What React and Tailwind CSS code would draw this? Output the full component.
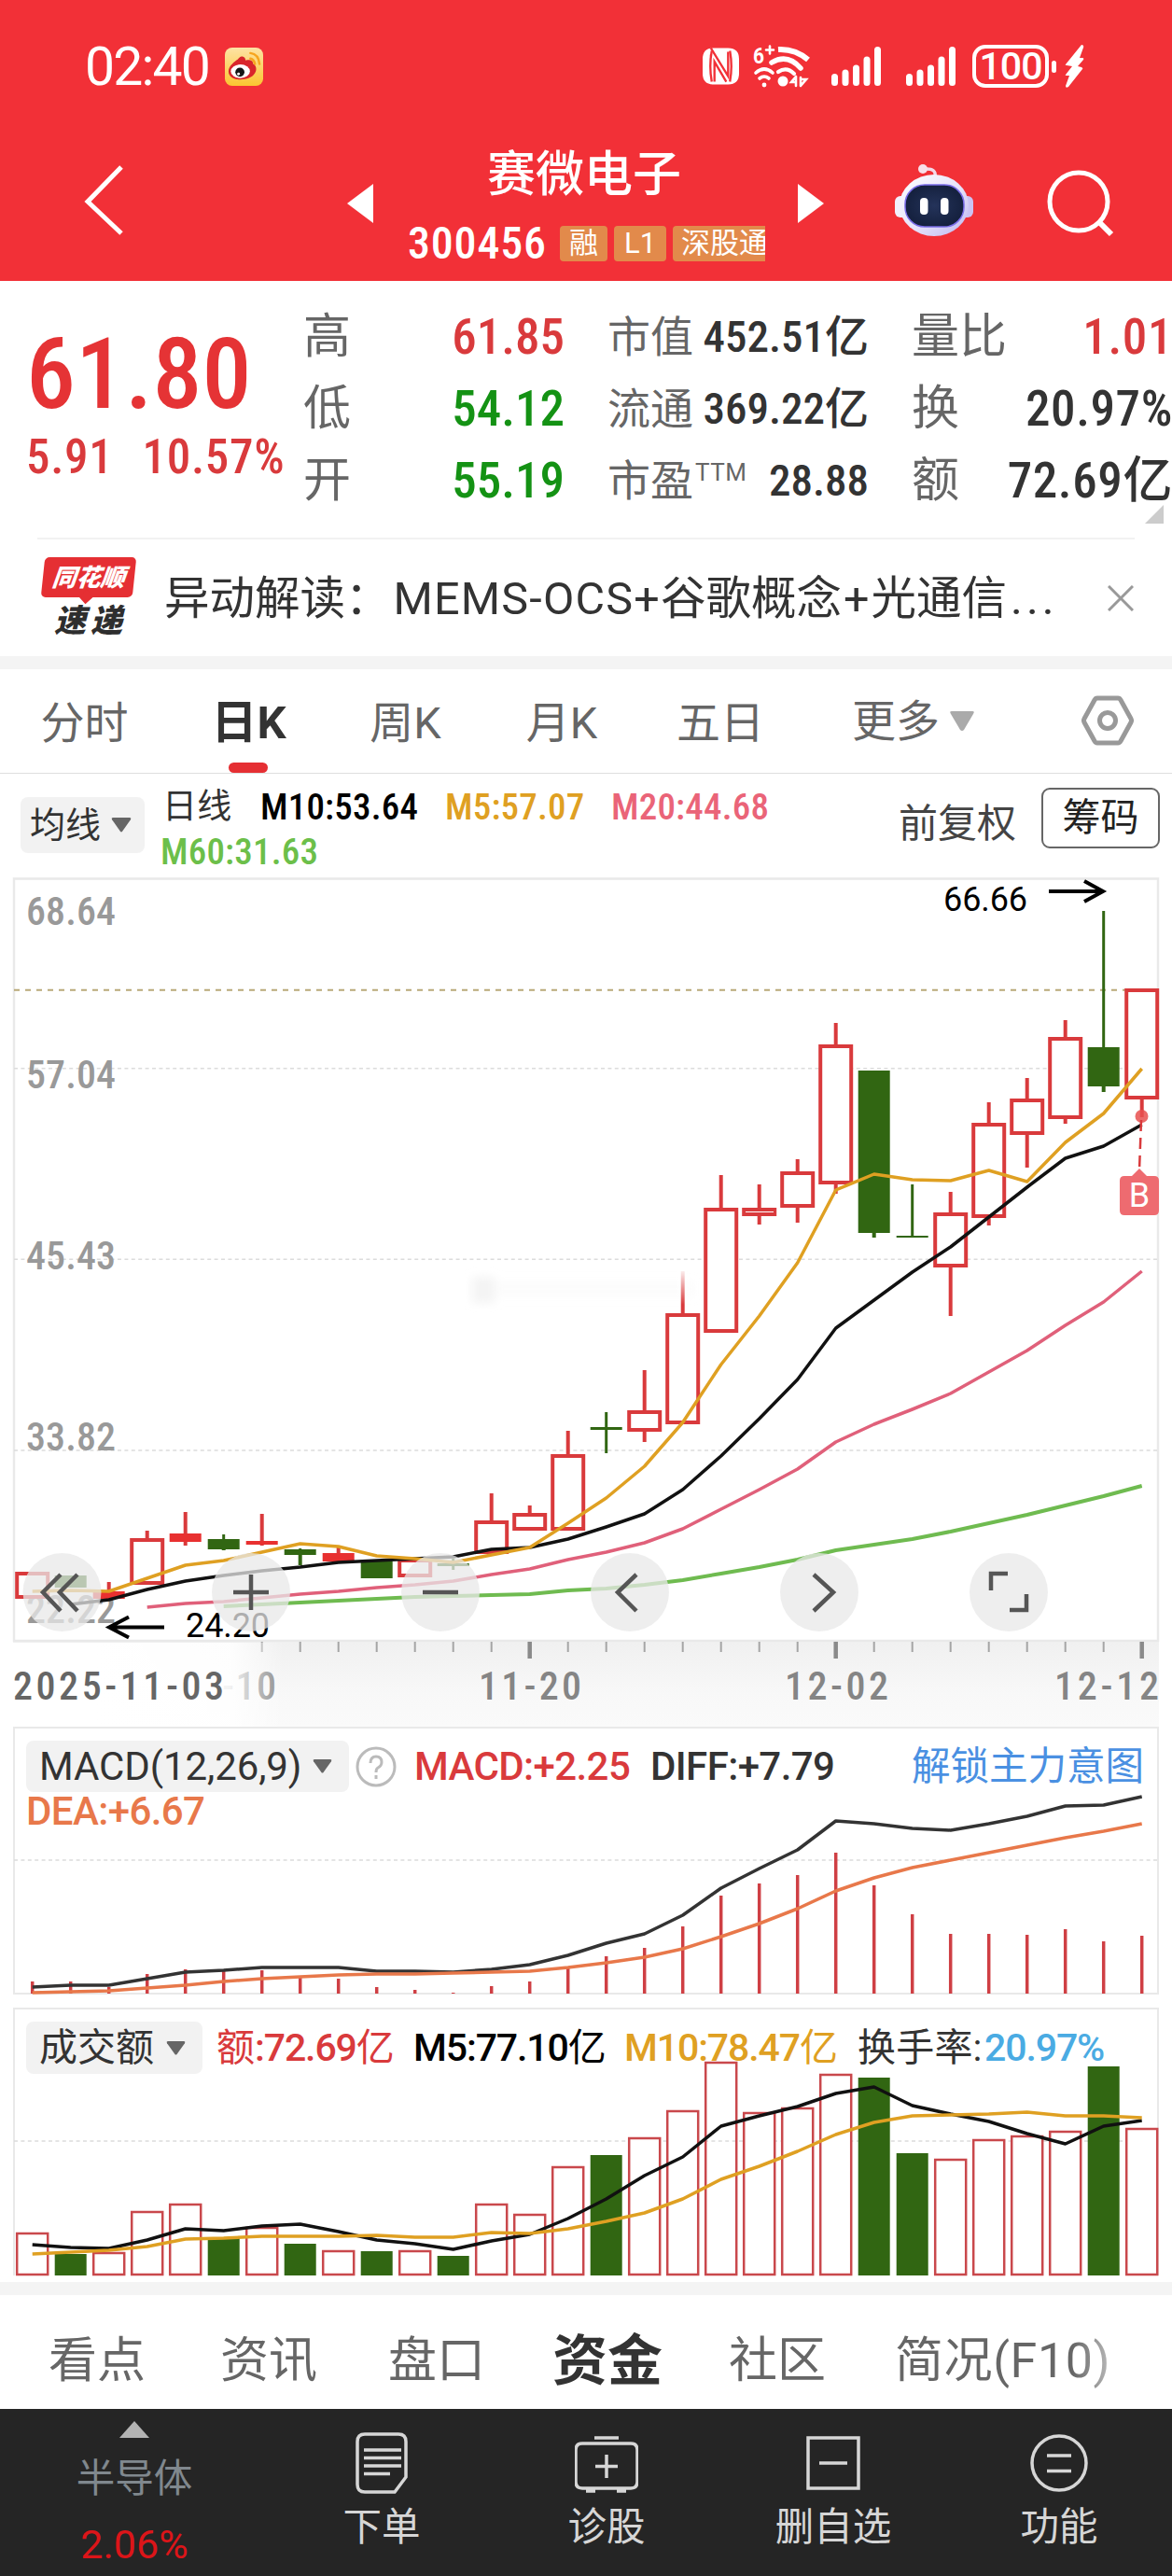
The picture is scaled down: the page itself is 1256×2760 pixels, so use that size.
import clsx from "clsx";

const RED = "#d93a3c";
const GREEN = "#316612";
const GOLD = "#dfa022";

// x centre of the nth trading day
const cx = (i) => 34.7 + i * 41;

// kind: h = hollow up, f = filled up, g = filled down, c = flat down
const CANDLES = [
  ["h", 1684, 1713, 1684, 1713],
  ["g", 1688, 1701, 1688, 1701],
  ["f", 1705, 1713, 1695, 1713],
  ["h", 1648, 1698, 1640, 1698],
  ["f", 1643, 1652, 1620, 1656],
  ["g", 1649, 1660, 1644, 1661],
  ["f", 1651, 1655, 1622, 1656],
  ["g", 1660, 1666, 1659, 1677],
  ["f", 1664, 1673, 1657, 1673],
  ["g", 1673, 1691, 1673, 1691],
  ["h", 1670, 1690, 1670, 1690],
  ["c", 1675, 1678, 1670, 1682],
  ["h", 1629, 1665, 1600, 1665],
  ["h", 1621, 1640, 1613, 1640],
  ["h", 1558, 1640, 1533, 1640],
  ["c", 1529, 1532, 1513, 1557],
  ["h", 1511, 1534, 1468, 1545],
  ["h", 1407, 1526, 1362, 1526],
  ["h", 1294, 1428, 1259, 1428],
  ["h", 1294, 1303, 1269, 1312],
  ["h", 1255, 1294, 1242, 1310],
  ["h", 1119, 1269, 1096, 1279],
  ["g", 1147, 1321, 1147, 1326],
  ["c", 1324, 1326, 1269, 1326],
  ["h", 1299, 1358, 1277, 1410],
  ["h", 1203, 1305, 1181, 1313],
  ["h", 1177, 1216, 1155, 1251],
  ["h", 1111, 1199, 1093, 1204],
  ["g", 1122, 1164, 976, 1170],
  ["h", 1059, 1178, 1059, 1197],
];

const MA5 = [1705, 1704, 1705, 1691, 1677, 1672, 1663, 1654, 1657, 1667, 1670, 1674, 1666, 1658, 1632, 1605, 1571, 1524, 1462, 1410, 1353, 1275, 1258, 1264, 1265, 1254, 1266, 1224, 1193, 1145];
const MA10 = [1719, 1714, 1703, 1694, 1688, 1683, 1679, 1674, 1672, 1670, 1668, 1660, 1658, 1649, 1636, 1622, 1596, 1560, 1520, 1478, 1423, 1393, 1363, 1336, 1304, 1272, 1241, 1228, 1205];
const MA20 = [1722, 1718, 1716, 1712, 1708, 1705, 1701, 1698, 1694, 1687, 1681, 1671, 1663, 1653, 1638, 1617, 1596, 1574, 1545, 1526, 1510, 1493, 1470, 1447, 1420, 1395, 1362];
const MA60 = [1721, 1719, 1717, 1715, 1713, 1711, 1710, 1709, 1708, 1704, 1702, 1698, 1693, 1686, 1679, 1671, 1661, 1655, 1649, 1641, 1632, 1623, 1613, 1603, 1592];

const MACD_BARS = [2123, 2123, 2129, 2115, 2110, 2111, 2111, 2118, 2120, 2129, 2132, 2135, 2128, 2123, 2109, 2096, 2087, 2064, 2031, 2018, 2009, 1985, 2020, 2051, 2072, 2072, 2073, 2067, 2080, 2074];
const DIFF = [2129, 2127, 2127, 2120, 2113, 2111, 2108, 2108, 2108, 2112, 2112, 2113, 2110, 2105, 2095, 2082, 2072, 2052, 2023, 2002, 1982, 1951, 1954, 1959, 1961, 1954, 1946, 1935, 1934, 1925];
const DEA = [2135, 2134, 2133, 2130, 2127, 2123, 2120, 2118, 2116, 2115, 2115, 2114, 2113, 2112, 2108, 2103, 2097, 2088, 2075, 2061, 2045, 2026, 2012, 2001, 1993, 1985, 1977, 1969, 1962, 1954];

const VOLUMES = [2392, 2415, 2413, 2369, 2361, 2398, 2386, 2404, 2411, 2412, 2411, 2417, 2361, 2372, 2321, 2309, 2290, 2261, 2209, 2263, 2258, 2222, 2226, 2307, 2313, 2292, 2288, 2283, 2214, 2280];
const VOLUME_DOWN = [1, 5, 7, 9, 11, 15, 22, 23, 28];
const VOL_M5 = [2405, 2408, 2409, 2400, 2388, 2390, 2385, 2383, 2391, 2400, 2404, 2410, 2401, 2394, 2377, 2356, 2331, 2311, 2278, 2267, 2257, 2243, 2236, 2256, 2265, 2273, 2286, 2297, 2278, 2272];
const VOL_M10 = [2415, 2413, 2411, 2407, 2399, 2398, 2396, 2396, 2396, 2395, 2397, 2397, 2392, 2393, 2388, 2380, 2371, 2356, 2335, 2321, 2305, 2287, 2274, 2267, 2266, 2265, 2263, 2267, 2267, 2269];

const Line = ({ data, from = 0, color, width = 3.5 }) => (
  <polyline
    points={data.map((y, i) => `${cx(i + from)},${y}`).join(" ")}
    fill="none"
    stroke={color}
    strokeWidth={width}
    strokeLinejoin="round"
  />
);

const Dashes = ({ y }) => (
  <line x1="15" x2="1241" y1={y} y2={y} stroke="#dcdcdc" strokeWidth="1.5" strokeDasharray="4 3.4" />
);

const Caret = ({ className }) => (
  <svg viewBox="0 0 20 14" preserveAspectRatio="none" className={className} fill="currentColor">
    <path d="M2 0h16q2 0 1 2l-8 11q-1 1-2 0L1 2Q0 0 2 0z" />
  </svg>
);

// --- Status bar ---
const Signal = () => (
  <svg viewBox="0 0 53 42" className="h-[42px] w-[53px]" stroke="#fff" strokeWidth="7" strokeLinecap="round">
    <path d="M3.5 32.500v6M15 28v10.500M26.500 23v15.500M38 14v24.500M49.500 3.500v35" />
  </svg>
);

const StatusBar = () => (
  <div className="flex h-[142px] items-center pl-[91px]">
    <span className="w-[150px] pt-[2px] text-[57px] leading-[68px] tracking-[-1.800px] text-white [font-family:Roboto,sans-serif]">02:40</span>
    <svg viewBox="0 0 42 42" className="h-[41px] w-[41px]">
      <defs>
        <linearGradient id="wb" x1="0" y1="0" x2="0" y2="1">
          <stop offset="0" stopColor="#fde3a4" />
          <stop offset="1" stopColor="#fbc531" />
        </linearGradient>
      </defs>
      <rect width="42" height="42" rx="8" fill="url(#wb)" />
      <path d="M28 6q9 1 10 12M28 12q4 1 5 6" fill="none" stroke="#f7a51e" strokeWidth="2.500" strokeLinecap="round" />
      <path d="M4 26c0-6 7-11 10-13 2-2 3-4 6-3 3 1 2 3 3 4 4-1 8 0 8 4 4 2 4 7 2 10-3 5-9 7-16 7-7 0-13-3-13-9z" fill="#d9252b" />
      <ellipse cx="17" cy="26" rx="10.500" ry="7.500" fill="#fff" />
      <circle cx="16.500" cy="27" r="5" fill="#161616" />
      <circle cx="15" cy="29" r="1.500" fill="#fff" />
    </svg>

    {/* nfc */}
    <svg viewBox="0 0 40 40" className="ml-[471px] h-10 w-[39px]">
      <path d="M12 0h16q12 0 12 12v16q0 12-12 12H12Q0 40 0 28V12Q0 0 12 0z" fill="#fff" />
      <path d="M10 3c-2 11-2 23 0 34M30 3c2 11 2 23 0 34" fill="none" stroke="#f23037" strokeWidth="2.400" />
      <path d="M9 0l19 31V4M9 8l-1 0M13 37V15l13 22" fill="none" stroke="#f23037" strokeWidth="2.400" />
    </svg>
    {/* wifi 6+ */}
    <svg viewBox="0 0 62 46" className="ml-[15px] h-[46px] w-[62px] overflow-visible" fill="none" stroke="#fff" strokeWidth="4.200" strokeLinecap="round">
      <text x="0" y="20" fontSize="24" fontWeight="700" stroke="none" fill="#fff" textLength="12" lengthAdjust="spacingAndGlyphs">6</text>
      <path d="M14 5.500h8M18 1.500v8" strokeWidth="2.600" />
      <path d="M27 5q18-1 32 11" strokeWidth="6" strokeLinecap="butt" />
      <path d="M20 19q17-10 31 6" strokeWidth="5.500" />
      <path d="M27 29q9-6 17 2" />
      <path d="M3 30q9-8 18 0M7 36q5-4 10 0" strokeWidth="3.600" />
      <circle cx="12" cy="43" r="2.400" fill="#fff" stroke="none" />
      <circle cx="32" cy="39" r="5.500" fill="#fff" stroke="none" />
      <path d="M46 34v10M46 34l-5 6h5M51 35v9M51 44l6-7h-6" strokeWidth="2.600" />
    </svg>
    <div className="ml-[22px] flex gap-[27px]">
      <Signal />
      <Signal />
    </div>
    <div className="ml-[18px] flex h-[46px] w-[82px] items-center justify-center rounded-[14px] border-[4px] border-white text-[41px] leading-none font-medium tracking-[-1px] text-white">
      100
    </div>
    <div className="ml-[3px] h-[13px] w-[5px] rounded-full bg-white" />
    <svg viewBox="0 0 21 46" className="ml-[9px] h-[46px] w-[21px]" fill="#fff">
      <path d="M18 0 1 21q-1 1 1 1l6 1-7 9q-1 1 1 1h3L1 44q0 3 3 1l15-19q1-1-1-2l-4-1 6-7q1-2-1-2l-3 0 4-11q1-3-2-3z" />
    </svg>
  </div>
);

const Robot = () => (
  <svg viewBox="0 0 84 77" className="h-[77px] w-[84px]">
    <defs>
      <linearGradient id="head" x1="0" y1="0" x2="1" y2="1">
        <stop offset="0" stopColor="#ffffff" />
        <stop offset="0.550" stopColor="#e6e2fa" />
        <stop offset="1" stopColor="#bdb6f0" />
      </linearGradient>
      <radialGradient id="visor">
        <stop offset="0" stopColor="#24335a" />
        <stop offset="1" stopColor="#15213f" />
      </radialGradient>
    </defs>
    <path d="M43 14q2-10-11-9" fill="none" stroke="#f3d9e8" strokeWidth="3.500" />
    <circle cx="30" cy="5" r="5" fill="#f8dfe9" />
    <rect x="0" y="34" width="14" height="23" rx="6" fill="#f2effd" />
    <rect x="70" y="34" width="14" height="23" rx="6" fill="#cbc3f3" />
    <ellipse cx="42" cy="44" rx="37" ry="33" fill="url(#head)" />
    <rect x="11" y="22" width="63" height="45" rx="21" fill="url(#visor)" stroke="#7a6ce8" strokeWidth="1.500" />
    <rect x="27" y="36" width="8.500" height="18" rx="4" fill="#fff" />
    <rect x="49" y="36" width="8.500" height="18" rx="4" fill="#fff" />
  </svg>
);

const TitleBar = () => (
  <div className="flex h-[159px] pl-[88px]">
    <svg viewBox="0 0 48 80" className="mt-[33px] h-[80px] w-[48px]" fill="none" stroke="#fff" strokeWidth="5">
      <path d="M42 4 6 41l36 34" />
    </svg>
    <svg viewBox="0 0 28 42" className="mt-[55px] ml-[236px] h-[42px] w-[28px]" fill="#fff">
      <path d="M28 0v42L0 21z" />
    </svg>
    <div className="ml-[37px] flex w-[384px] flex-col">
      <div className="mt-[19px] pl-[85px] text-[52px] leading-[54px] font-medium text-white">赛微电子</div>
      <div className="mt-[22px] flex h-[48px] items-center text-white">
        <span className="w-[163px] text-[48px] leading-[58px] font-medium tracking-[0.800px] [font-family:'Roboto_Condensed',sans-serif]">300456</span>
        <div className="flex shrink-0 gap-[7px] text-[31px] leading-[38px]">
          <span className="w-[51px] rounded-[4px] bg-[#e28a4b] text-center">融</span>
          <span className="w-[56px] rounded-[4px] bg-[#e28a4b] text-center">L1</span>
          <span className="w-[99px] shrink-0 overflow-hidden rounded-l-[4px] bg-[#e28a4b] pl-[9px] whitespace-nowrap">深股通</span>
        </div>
      </div>
    </div>
    <svg viewBox="0 0 28 42" className="mt-[55px] ml-[34px] h-[42px] w-[28px]" fill="#fff">
      <path d="M0 0v42l28-21z" />
    </svg>
    <div className="mt-[34px] ml-[76px]">
      <Robot />
    </div>
    <svg viewBox="0 0 72 72" className="mt-[40px] ml-[79px] h-[72px] w-[72px]" fill="none" stroke="#fff" strokeWidth="5">
      <circle cx="34" cy="34" r="31" />
      <path d="m56 56 13 13" strokeWidth="6" />
    </svg>
  </div>
);

// --- Quote ---
const QUOTES = [
  [["高", "61.85", "text-[#d93a3c]"], ["市值", "452.51亿", "text-[#333]"], ["量比", "1.01", "text-[#d93a3c]"]],
  [["低", "54.12", "text-[#149214]"], ["流通", "369.22亿", "text-[#333]"], ["换", "20.97%", "text-[#333]"]],
  [["开", "55.19", "text-[#149214]"], ["市盈", "28.88", "text-[#333]"], ["额", "72.69亿", "text-[#333]"]],
];

const Quote = () => (
  <section className="relative flex h-[275px] [font-family:'Roboto_Condensed','Noto_Sans_CJK_SC',sans-serif]">
    <div className="w-[325px] shrink-0 pl-[28px] whitespace-nowrap text-[#e53335]">
      <div className="mt-[47px] text-[106px] leading-[106px] font-medium">61.80</div>
      <div className="mt-[10px] flex gap-[31px] text-[51px] leading-[52px] font-medium tracking-[0.700px] text-[#d93a3c]">
        <span>5.91</span>
        <span>10.57%</span>
      </div>
    </div>
    <div className="mt-[21px] flex flex-1 flex-col">
      {QUOTES.map((row, r) => (
        <div key={r} className="flex h-[77px] gap-[46px]">
          {row.map(([label, value, color], c) => (
            <div key={label} className="flex w-[280px] shrink-0 items-center justify-between leading-[64px] whitespace-nowrap">
              <span className={clsx("flex text-[#666]", c === 1 ? "text-[46px]" : "text-[51px]")}>
                {label}
                {label === "市盈" && <span className="-mt-[9px] ml-[2px] text-[26px] tracking-[0.500px] [font-family:Roboto]">TTM</span>}
              </span>
              <span className={clsx("font-medium", color, c === 1 && "text-[47px]", c === 0 && "text-[53px]", c === 2 && "text-[53px] tracking-[0.600px]")}>
                {value}
              </span>
            </div>
          ))}
        </div>
      ))}
    </div>
    <svg viewBox="0 0 20 20" className="absolute top-[240px] right-[9px] size-5" fill="#ccc">
      <path d="M20 0v20H0z" />
    </svg>
  </section>
);

const News = () => (
  <section className="mx-[40px] flex h-[127px] items-center border-t-2 border-[#f2f2f2]">
    <div className="ml-[3px] flex h-[88px] w-[103px] flex-col items-center leading-none font-black italic">
      <div className="relative flex h-[43px] w-[98px] -skew-x-6 items-center justify-center rounded-[5px] bg-[#e52f33] text-[26px] text-white">
        同花顺
        <div className="absolute -bottom-[5px] left-[43px] size-[11px] rotate-45 bg-[#e52f33]" />
      </div>
      <div className="mt-[8px] flex gap-[5px] text-[34px] text-[#2e2e2e]">
        <span>速</span>
        <span>递</span>
      </div>
    </div>
    <p className="ml-[30px] w-[1011px] pt-[2px] text-[48.500px] leading-[60px] whitespace-nowrap text-[#333]">
      异动解读：<span className="ml-[3px] tracking-[1.200px]">MEMS-OCS+</span>谷歌概念<span className="px-[2px]">+</span>光通信<span className="ml-[4px] tracking-[4px]">...</span>
    </p>
    <svg viewBox="0 0 28 28" className="h-[28px] w-[28px] shrink-0" stroke="#999" strokeWidth="3">
      <path d="m1 1 26 26M27 1 1 27" />
    </svg>
  </section>
);

// --- Period tabs ---
const PERIODS = [
  ["分时", "w-[181px]"],
  ["日K", "w-[174px]"],
  ["周K", "w-[159px]"],
  ["月K", "w-[176px]"],
  ["五日", "w-[164px]"],
];

const PeriodTabs = () => (
  <nav className="flex h-[112px] border-b border-[#dedede] text-[47px] leading-[115px] text-[#666]">
    {PERIODS.map(([name, width]) => (
      <div key={name} className={clsx("relative text-center", width, name === "日K" && "pr-[3px] text-[49px] font-bold text-[#333]")}>
        {name}
        {name === "日K" && <div className="absolute bottom-0 left-[64px] h-[11px] w-[42px] rounded-full bg-[#e52f33]" />}
      </div>
    ))}
    <div className="flex w-[305px] items-center pl-[59px]">
      更多
      <svg viewBox="0 0 26 22" className="ml-[11px] h-[22px] w-[26px]" fill="#aaa">
        <path d="M2 0h22q3 0 1 3L15 20q-2 2-4 0L1 3Q-1 0 2 0z" />
      </svg>
    </div>
    <svg viewBox="0 0 56 54" className="mt-[28px] h-[54px] w-[56px]" fill="none" stroke="#999" strokeWidth="5" strokeLinejoin="round">
      <path d="M17 3h22q2 0 3 2l11 20q1 2 0 4L42 49q-1 2-3 2H17q-2 0-3-2L3 29q-1-2 0-4L14 5q1-2 3-2z" />
      <circle cx="28" cy="27" r="8.500" />
    </svg>
  </nav>
);

const AverageBar = () => (
  <div className="flex h-[111px]">
    <div className="mt-[25px] ml-[22px] flex h-[60px] w-[133px] items-center rounded-[8px] bg-[#f2f2f2] pl-[10px] text-[38px] leading-none text-[#333]">
      均线
      <Caret className="ml-[11px] h-[16px] w-[22px] text-[#666]" />
    </div>
    <div className="ml-[19px] w-[789px] pt-[12px] text-[39px] leading-[48px] font-medium tracking-[0.200px] [font-family:'Roboto_Condensed','Noto_Sans_CJK_SC',sans-serif]">
      <div className="flex">
        <span className="w-[105px] text-[37px] font-normal text-[#333]">日线</span>
        <span className="w-[198px] text-black">M10:53.64</span>
        <span className="w-[178px] text-[#dfa022]">M5:57.07</span>
        <span className="text-[#ea6478]">M20:44.68</span>
      </div>
      <div className="-ml-[2px] text-[#6cbf4a]">M60:31.63</div>
    </div>
    <div className="mt-[33px] w-[153px] text-[42px] leading-[42px] text-[#444]">前复权</div>
    <div className="mt-[15px] flex h-[65px] w-[127px] items-center justify-center rounded-[9px] border-2 border-[#666] text-[41px] leading-none text-[#222]">
      筹码
    </div>
  </div>
);

// --- K line chart ---
const Candle = ({ i, kind, top, bottom, high, low }) => {
  const color = kind === "g" || kind === "c" ? GREEN : RED;
  const x = cx(i);
  return (
    <g stroke={color} strokeWidth="4">
      {high < top && <line x1={x} x2={x} y1={high} y2={top} strokeWidth={kind === "g" || kind === "c" ? 3 : 4} />}
      {low > bottom && <line x1={x} x2={x} y1={bottom} y2={low} strokeWidth={kind === "c" ? 3 : 4} />}
      {kind === "h" ? (
        <rect x={x - 16.5} y={top + 2} width="33" height={bottom - top - 4} fill="#fff" />
      ) : (
        <rect x={x - 17} y={top} width="34" height={bottom - top} fill={kind === "f" ? "#e83030" : color} stroke="none" />
      )}
    </g>
  );
};

const PRICES = [["68.64", 991], ["57.04", 1166], ["45.43", 1360], ["33.82", 1554], ["22.22", 1739]];
const DATES = [["11-20", 516, 106], ["12-02", 844, 107], ["12-12", 1133, 108]];
const BUTTONS = [
  [66.5, "M65 1687 46 1706l19 20M83 1687l-19 19 19 20"],
  [269, "M250 1706h38M269 1687v38"],
  [472, "M453 1706h38"],
  [675, "M682 1687l-20 19 20 20"],
  [878, "M872 1687l21 19-21 20"],
  [1081, "M1080 1686h-18v18M1100 1708v17h-18"],
];

const KLineChart = () => (
  <svg viewBox="0 940 1256 910" className="block h-[910px] w-[1256px] [font-family:'Roboto_Condensed',sans-serif]">
    <defs>
      <linearGradient id="axis" x1="0" y1="0" x2="0" y2="1">
        <stop offset="0" stopColor="#f0f0f0" />
        <stop offset="0.600" stopColor="#f8f8f8" />
        <stop offset="1" stopColor="#fafafa" />
      </linearGradient>
      <linearGradient id="axisFade" x1="0" x2="1">
        <stop offset="0.300" stopColor="#fff" />
        <stop offset="0.800" stopColor="#fff" stopOpacity="0.900" />
        <stop offset="1" stopColor="#fff" stopOpacity="0" />
      </linearGradient>
      <linearGradient id="wickFade" x1="0" y1="0" x2="0" y2="1">
        <stop offset="0" stopColor="#fff" />
        <stop offset="1" stopColor="#fff" stopOpacity="0" />
      </linearGradient>
      <filter id="smudge" x="-20%" y="-50%" width="140%" height="200%">
        <feGaussianBlur stdDeviation="5" />
      </filter>
    </defs>

    <rect x="14" y="1759" width="1228" height="91" fill="url(#axis)" />
    <rect x="15" y="941.500" width="1226" height="816.500" fill="none" stroke="#e9e9e9" strokeWidth="2.500" />
    {[1144.7, 1349.3, 1554].map((y) => <Dashes key={y} y={y} />)}
    <line x1="15" x2="1210" y1="1060.700" y2="1060.700" stroke="#b9a978" strokeWidth="2" strokeDasharray="6 6" />

    <g filter="url(#smudge)" fill="#ececec">
      <rect x="506" y="1368" width="24" height="28" opacity="0.600" />
      <rect x="530" y="1372" width="215" height="18" opacity="0.150" />
    </g>

    <g fill="#999" fontSize="42" fontWeight="500">
      {PRICES.map(([p, y]) => (
        <text key={p} x="28" y={y} textLength="96">{p}</text>
      ))}
    </g>

    {CANDLES.map(([kind, top, bottom, high, low], i) => (
      <Candle key={i} i={i} kind={kind} top={top} bottom={bottom} high={high} low={low} />
    ))}
    <rect x="725" y="1358" width="14" height="40" fill="url(#wickFade)" />

    <Line data={MA60} from={5} color="#6fbb50" width={4} />
    <Line data={MA20} from={3} color="#e0607a" />
    <Line data={MA10} from={1} color="#111" />
    <Line data={MA5} color={GOLD} />

    {/* high / low markers */}
    <g fontSize="36" style={{ fontFamily: "Roboto" }}>
      <text x="1011" y="976" textLength="90">66.66</text>
      <text x="199" y="1754" textLength="90">24.20</text>
    </g>
    <path d="M1124 955h57M1162 944l20 11-20 11M176 1743.500h-58M138 1732.500l-21 11 21 11" fill="none" stroke="#000" strokeWidth="4" />

    {/* buy point */}
    <circle cx="1223.500" cy="1196" r="7" fill="#e8504f" opacity="0.850" />
    <path d="M1223 1200 1221 1254" stroke="#d93a3c" strokeWidth="2.500" strokeDasharray="12 7" />
    <path d="M1221 1252l8 8h8q5 0 5 5v32q0 5-5 5h-32q-5 0-5-5v-32q0-5 5-5h8z" fill="#ee6b70" />
    <text x="1221" y="1293" fontSize="36" fill="#fff" textAnchor="middle" style={{ fontFamily: "Roboto" }}>B</text>

    {/* chart controls */}
    {BUTTONS.map(([x, d]) => (
      <g key={x}>
        <circle cx={x} cy="1706" r="42" fill="#e8e8e8" opacity="0.750" />
        <path d={d} fill="none" stroke="#555" strokeWidth="4.500" />
      </g>
    ))}

    {/* date axis */}
    {CANDLES.map((_, i) => {
      const major = i === 13 || i === 21 || i === 29;
      if (i < 6) return null;
      return (
        <line
          key={i}
          x1={cx(i)}
          x2={cx(i)}
          y1="1759"
          y2={major ? 1777 : 1770}
          stroke={major ? "#8a8a8a" : "#a5a5a5"}
          strokeWidth={major ? 4.5 : 2}
        />
      );
    })}
    <text x="238" y="1821" fontSize="42" fontWeight="500" fill="#8a8a8a" textLength="58">-10</text>
    <rect x="14" y="1760" width="290" height="90" fill="url(#axisFade)" />
    <text x="14" y="1821" fontSize="42" fontWeight="500" fill="#666" textLength="226">2025-11-03</text>
    <g fontSize="42" fontWeight="500" fill="#858585">
      {DATES.map(([d, x, w]) => (
        <text key={d} x={x - 3} y="1821" textLength={w + 4}>{d}</text>
      ))}
    </g>
  </svg>
);

const MacdPanel = () => (
  <div className="grid h-[301px]">
    <div className="col-start-1 row-start-1 pt-[15px] pl-[28px] text-[42px] font-medium tracking-[-0.600px]">
      <div className="flex h-[55px] items-center leading-none">
        <div className="flex h-[55px] w-[346px] items-center rounded-[8px] bg-[#f2f2f2] pl-[14px] font-normal tracking-[-0.100px] text-[#333]">
          MACD(12,26,9)
          <Caret className="ml-[12px] h-[15px] w-[21px] text-[#666]" />
        </div>
        <svg viewBox="0 0 44 44" className="ml-[7px] h-[44px] w-[44px]" fill="none" stroke="#bbb" strokeWidth="3">
          <circle cx="22" cy="22" r="20" />
          <path d="M16 18q0-7 6-7t6 6q0 4-4 6-2 1-2 5M22 31v4" />
        </svg>
        <span className="ml-[19px] w-[253px] text-[#d93a3c]">MACD:+2.25</span>
        <span className="w-[280px] text-[#333]">DIFF:+7.79</span>
        <span className="text-[41.500px] font-normal tracking-normal whitespace-nowrap text-[#4a90e2]">解锁主力意图</span>
      </div>
      <div className="leading-[42px] text-[#e8784a]">DEA:+6.67</div>
    </div>
    <svg viewBox="0 1850 1256 301" className="col-start-1 row-start-1 h-[301px] w-[1256px]">
      <rect x="15" y="1851" width="1226" height="285" fill="none" stroke="#e9e9e9" strokeWidth="2" />
      <Dashes y={1993} />
      {MACD_BARS.map((y, i) => (
        <line key={i} x1={cx(i)} x2={cx(i)} y1={y} y2="2136" stroke="#cf3f44" strokeWidth="3.500" />
      ))}
      <Line data={DIFF} color="#333" />
      <Line data={DEA} color="#e8784a" />
    </svg>
  </div>
);

const VolumePanel = () => (
  <div className="grid h-[294px]">
    <div className="col-start-1 row-start-1 flex h-[72px] items-center pt-[14px] pl-[28px] text-[41px] leading-none font-medium tracking-[-1.100px] whitespace-nowrap">
      <div className="flex h-[56px] w-[189px] items-center rounded-[8px] bg-[#f2f2f2] pl-[14px] font-normal tracking-normal text-[#333]">
        成交额
        <Caret className="ml-[13px] h-[15px] w-[21px] text-[#666]" />
      </div>
      <span className="ml-[15px] w-[211px] text-[#d93a3c]"><span className="font-normal tracking-normal">额</span>:72.69<span className="font-normal">亿</span></span>
      <span className="w-[226px] text-black">M5:77.10<span className="font-normal">亿</span></span>
      <span className="w-[250px] text-[#dfa022]">M10:78.47<span className="font-normal">亿</span></span>
      <span className="w-[136px] font-normal tracking-[0.200px] text-[#333]">换手率:</span>
      <span className="text-[#4aabe3]">20.97%</span>
    </div>
    <svg viewBox="0 2151 1256 294" className="col-start-1 row-start-1 h-[294px] w-[1256px]">
      <path d="M15 2438V2152H1241V2438" fill="none" stroke="#e9e9e9" strokeWidth="2" />
      <Dashes y={2294} />
      {VOLUMES.map((y, i) =>
        VOLUME_DOWN.includes(i) ? (
          <rect key={i} x={cx(i) - 17} y={y} width="34" height={2438 - y} fill={GREEN} />
        ) : (
          <rect key={i} x={cx(i) - 16.5} y={y + 1} width="33" height={2436 - y} fill="#fff" fillOpacity={i === 18 ? 0 : 1} stroke="#c9484c" strokeWidth="2.500" />
        )
      )}
      <Line data={VOL_M5} color="#111" />
      <Line data={VOL_M10} color={GOLD} />
    </svg>
  </div>
);

// --- Bottom ---
const SECTIONS = [
  ["看点", "w-[184px]"],
  ["资讯", "w-[184px]"],
  ["盘口", "w-[176px]"],
  ["资金", "w-[190px]"],
  ["社区", "w-[174px]"],
];

const SectionTabs = () => (
  <nav className="flex h-[122px] pl-[12px] text-[52px] leading-[142px] text-[#666]">
    {SECTIONS.map(([name, width]) => (
      <div key={name} className={clsx("text-center", width, name === "资金" && "text-[59px] font-bold text-[#333]")}>
        {name}
      </div>
    ))}
    <div className="bg-gradient-to-r from-[#666] from-85% to-[#bbb] bg-clip-text pl-[39px] text-[52px] tracking-[0.600px] text-transparent">简况(F10)</div>
  </nav>
);

const ACTIONS = [
  {
    label: "下单",
    width: "w-[242px]",
    icon: <path d="M14 5h36q8 0 8 8v38L46 67H14q-8 0-8-8V13q0-8 8-8zM13 22h40M13 30.500h40M13 39h40M13 47.500h28" />,
  },
  {
    label: "诊股",
    width: "w-[240px]",
    icon: <path d="M6 15h52q7 0 7 7v34q0 7-7 7H6q-7 0-7-7V22q0-7 7-7zM19 9h26M32 27v25M20 39.500h24M10 66h10M43 66h10" />,
  },
  {
    label: "删自选",
    width: "w-[246px]",
    icon: <path d="M5 9h54v54H5zM17 36h30" />,
  },
  {
    label: "功能",
    width: "w-[238px]",
    icon: <path d="M32 7a29 29 0 1 1 0 58a29 29 0 1 1 0-58zM19 28h26M19 44.500h26" />,
  },
];

const BottomBar = () => (
  <footer className="flex h-[179px] bg-[#252525] text-center text-[41.500px] text-[#d6d6d6]">
    <div className="flex w-[288px] flex-col items-center">
      <svg viewBox="0 0 32 18" className="mt-[13px] h-[18px] w-[32px]" fill="#b3b3b3">
        <path d="M16 0l16 18H0z" />
      </svg>
      <span className="mt-[18px] leading-[52px] text-[#80888e]">半导体</span>
      <span className="mt-[18px] text-[43px] leading-[52px] text-[#dc1519]">2.06%</span>
    </div>
    {ACTIONS.map(({ label, width, icon }) => (
      <div key={label} className={clsx("flex flex-col items-center", width)}>
        <svg viewBox="-2 0 68 72" className="mt-[22px] h-[72px] w-[68px]" fill="none" stroke="#d6d6d6" strokeWidth="3.500">
          {icon}
        </svg>
        <span className="mt-[7px] leading-[52px]">{label}</span>
      </div>
    ))}
  </footer>
);

export default function App() {
  return (
    <div className="w-[1256px] overflow-hidden bg-white [font-family:Roboto,'Noto_Sans_CJK_SC',sans-serif]">
      <header className="bg-[#f23037]">
        <StatusBar />
        <TitleBar />
      </header>
      <Quote />
      <News />
      <div className="h-[14px] bg-[#f4f4f4]" />
      <PeriodTabs />
      <AverageBar />
      <KLineChart />
      <MacdPanel />
      <VolumePanel />
      <div className="h-[14px] bg-[#f4f4f4]" />
      <SectionTabs />
      <BottomBar />
    </div>
  );
}
